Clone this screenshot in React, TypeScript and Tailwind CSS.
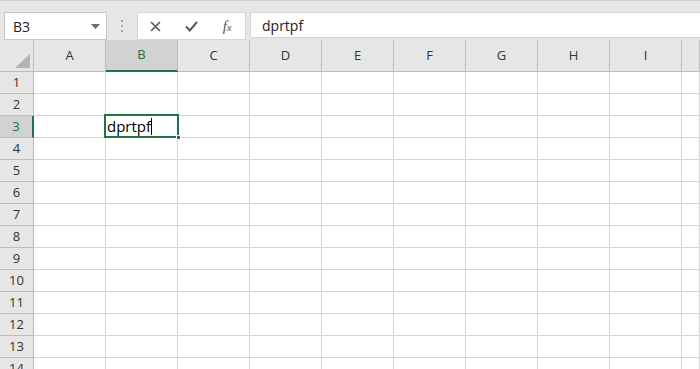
import React from 'react'

const cols = ['A', 'B', 'C', 'D', 'E', 'F', 'G', 'H', 'I', '']
const rows = Array.from({ length: 14 }, (_, i) => i + 1)

const font = { fontFamily: '"Open Sans", "Noto Sans", sans-serif' }

const TopBar: React.FC = () => (
  <div className="h-[40px] bg-[#e6e6e6] border-t border-[#d0d0d0] flex items-start pt-[11px] pl-[4px]">
    <div className="w-[103px] h-[28px] bg-white border border-[#c6c6c6] flex items-center pl-[8px] pr-[6px] text-[14px] text-[#222]">
      <span className="flex-1">B3</span>
      <svg width="9" height="5" viewBox="0 0 9 5">
        <path d="M0 0h9L4.5 5z" fill="#6d6d6d" />
      </svg>
    </div>
    <div className="w-[30px] h-[28px] flex flex-col items-center justify-center gap-[3px]">
      <span className="w-[2px] h-[2px] bg-[#a8a8a8]" />
      <span className="w-[2px] h-[2px] bg-[#a8a8a8]" />
      <span className="w-[2px] h-[2px] bg-[#a8a8a8]" />
    </div>
    <div className="w-[109px] h-[28px] bg-white border border-[#d4d4d4] flex items-center">
      <div className="w-[36px] flex justify-center">
        <svg width="11" height="11" viewBox="0 0 11 11">
          <path d="M1 1l9 9M10 1l-9 9" stroke="#595959" strokeWidth="1.6" />
        </svg>
      </div>
      <div className="w-[36px] flex justify-center">
        <svg width="13" height="11" viewBox="0 0 13 11">
          <path d="M1 5.5l3.8 4L12 1" stroke="#595959" strokeWidth="2" fill="none" />
        </svg>
      </div>
      <div className="w-[36px] flex justify-center items-baseline text-[15px] italic text-[#555]" style={{ fontFamily: '"Liberation Serif", serif' }}>
        f<span className="text-[11px]">x</span>
      </div>
    </div>
    <div className="ml-[4px] flex-1 h-[26px] bg-white border-y border-l border-[#d4d4d4] flex items-center pl-[11px] text-[14px] text-[#222]">
      dprtpf
    </div>
  </div>
)

const Sheet: React.FC = () => (
  <div className="grid grid-cols-[34px_repeat(9,72px)_1fr] bg-white">
    <div className="h-[32px] bg-[#e6e6e6] border-r border-b border-[#bdbdbd] flex items-end justify-end pr-[3px] pb-[3px]">
      <svg width="15" height="14" viewBox="0 0 15 14">
        <path d="M15 0v14H0z" fill="#b4b4b4" />
      </svg>
    </div>
    {cols.map((c, i) => (
      <div
        key={`h-${i}`}
        className={
          c === 'B'
            ? 'h-[32px] bg-[#d2d2d2] border-r border-[#bdbdbd] border-b-2 border-b-[#217346] flex items-center justify-center text-[13px] text-[#217346]'
            : 'h-[32px] bg-[#e6e6e6] border-r border-b border-[#bdbdbd] flex items-center justify-center text-[13px] text-[#333]'
        }
      >
        {c}
      </div>
    ))}
    {rows.map(r => (
      <React.Fragment key={`r-${r}`}>
        <div
          className={
            r === 3
              ? 'h-[22px] bg-[#d2d2d2] border-b border-[#bdbdbd] border-r-2 border-r-[#217346] flex items-center justify-center text-[13px] text-[#217346]'
              : 'h-[22px] bg-[#e6e6e6] border-r border-b border-[#bdbdbd] flex items-center justify-center text-[13px] text-[#333]'
          }
        >
          {r}
        </div>
        {cols.map((c, i) => (
          <div key={`c-${r}-${i}`} className="h-[22px] border-r border-b border-[#d4d4d4] relative">
            {r === 3 && c === 'B' && (
              <div className="absolute left-[-2px] top-[-2px] w-[75px] h-[24px] border-2 border-[#217346] z-10 flex items-center pl-[1px] pt-[1px] text-[15px] text-black">
                <span>dprtpf</span>
                <span className="w-px h-[17px] bg-black" />
                <span className="absolute right-[-4px] bottom-[-4px] w-[5px] h-[5px] bg-[#217346] border border-white" />
              </div>
            )}
          </div>
        ))}
      </React.Fragment>
    ))}
  </div>
)

export default function App() {
  return (
    <div className="w-[700px] h-[369px] overflow-hidden bg-white" style={font}>
      <TopBar />
      <Sheet />
    </div>
  )
}
